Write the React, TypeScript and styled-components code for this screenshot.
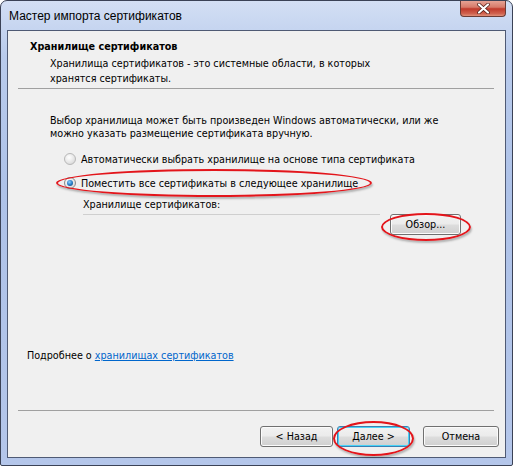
import React from "react";
import styled, { createGlobalStyle } from "styled-components";

const GlobalStyle = createGlobalStyle`
  html, body {
    margin: 0;
    padding: 0;
    background: #ffffff;
  }
  body {
    font-family: Tahoma, "DejaVu Sans Condensed", "DejaVu Sans", sans-serif;
    font-stretch: condensed;
    font-size: 10.7px;
    color: #000;
  }
`;

const Window = styled.div`
  position: relative;
  width: 513px;
  height: 466px;
  box-sizing: border-box;
  border: 1px solid #3b4256;
  border-radius: 7px 7px 2px 2px;
  background: linear-gradient(180deg, #d3dff4 0%, #b9cbec 12%, #aec2e8 40%, #b4c6ea 100%);
  display: flex;
  flex-direction: column;
  overflow: hidden;
`;

const TitleBar = styled.div`
  height: 29px;
  display: flex;
  align-items: flex-start;
  justify-content: space-between;
  padding-left: 8px;
`;

const Title = styled.div`
  font-family: "Liberation Sans", Arial, sans-serif;
  font-stretch: normal;
  font-size: 12px;
  line-height: 14px;
  margin-top: 8px;
  color: #000;
`;

const CloseButton = styled.div`
  width: 46px;
  height: 17px;
  margin-right: 6px;
  margin-top: -1px;
  box-sizing: border-box;
  border: 1px solid #6b3b35;
  border-top: none;
  border-radius: 0 0 4px 4px;
  background: linear-gradient(180deg, #e8a89a 0%, #d77a6a 45%, #c0392b 55%, #d0624f 85%, #e0907a 100%);
  display: flex;
  align-items: center;
  justify-content: center;
`;

const Client = styled.div`
  flex: 1;
  margin: 0 6px 7px 6px;
  border: 1px solid #4f5a74;
  background: #f0f0f0;
  display: flex;
  flex-direction: column;
`;

const Header = styled.div`
  padding: 9px 0 0 22px;
`;

const HeaderTitle = styled.div`
  font-weight: bold;
  line-height: 14px;
`;

const HeaderText = styled.div`
  margin-top: 2px;
  padding-left: 20px;
  line-height: 15px;
  width: 350px;
`;

const Separator = styled.div<{ $top: number }>`
  height: 1px;
  margin: ${(p) => p.$top}px 11px 0 10px;
  background: #a0a0a0;
`;

const Body = styled.div`
  flex: 1;
  display: flex;
  flex-direction: column;
  padding: 25px 0 0 42px;
`;

const Paragraph = styled.div`
  line-height: 13px;
  width: 420px;
`;

const Options = styled.div`
  margin-top: 7px;
  padding-left: 14px;
  display: flex;
  flex-direction: column;
`;

const OptionRow = styled.label`
  display: flex;
  align-items: center;
  gap: 5px;
  height: 24px;
  color: #000;
`;

const Radio = styled.span<{ $checked?: boolean }>`
  width: 12px;
  height: 12px;
  box-sizing: border-box;
  border-radius: 50%;
  border: 1px solid ${(p) => (p.$checked ? "#8a8a8a" : "#b8b8b8")};
  background: radial-gradient(circle at 40% 35%, #ffffff 0%, #e6e6e6 55%, #cfcfcf 100%);
  display: flex;
  align-items: center;
  justify-content: center;
  &::after {
    content: "";
    display: ${(p) => (p.$checked ? "block" : "none")};
    width: 6px;
    height: 6px;
    border-radius: 50%;
    background: radial-gradient(circle at 40% 35%, #8fd0ff 0%, #2a7fc8 50%, #0b3d6e 100%);
  }
`;

const StoreBlock = styled.div`
  padding-left: 33px;
  margin-top: 3px;
`;

const StoreLabel = styled.div`
  line-height: 13px;
`;

const StoreRow = styled.div`
  display: flex;
  align-items: flex-start;
  margin-top: 3px;
  gap: 10px;
`;

const StoreField = styled.div`
  width: 297px;
  height: 22px;
  box-sizing: border-box;
  border-top: 1px solid #cfcfcf;
`;

const Button = styled.div<{ $default?: boolean; $width?: number }>`
  width: ${(p) => p.$width ?? 73}px;
  height: 21px;
  box-sizing: border-box;
  border: 1px solid ${(p) => (p.$default ? "#3c7fb1" : "#707070")};
  border-radius: 3px;
  background: linear-gradient(180deg, #f2f2f2 0%, #ebebeb 48%, #dddddd 52%, #cfcfcf 100%);
  box-shadow: inset 0 0 0 1px ${(p) => (p.$default ? "#48d3f7" : "#fbfbfb")};
  display: flex;
  align-items: center;
  justify-content: center;
  line-height: 13px;
  color: #000;
`;

const Spacer = styled.div`
  flex: 1;
`;

const MoreInfo = styled.div`
  padding-left: 19px;
  line-height: 13px;
`;

const Link = styled.span`
  color: #0066cc;
  text-decoration: underline;
`;

const Footer = styled.div`
  display: flex;
  justify-content: flex-end;
  gap: 4px;
  padding: 15px 6px 10px 0;
`;

const FooterGap = styled.div`
  width: 5px;
`;

/* red marker ellipses drawn on top of the dialog */
const Marker = styled.div<{ $x: number; $y: number; $w: number; $h: number }>`
  position: absolute;
  left: ${(p) => p.$x}px;
  top: ${(p) => p.$y}px;
  width: ${(p) => p.$w}px;
  height: ${(p) => p.$h}px;
  box-sizing: border-box;
  border: 2px solid #e3151b;
  border-radius: 50%;
  box-shadow: 1px 2px 2px rgba(0, 0, 0, 0.25);
  pointer-events: none;
`;

export default function App() {
  return (
    <>
      <GlobalStyle />
      <Window>
        <TitleBar>
          <Title>Мастер импорта сертификатов</Title>
          <CloseButton>
            <svg width="13" height="11" viewBox="0 0 13 11">
              <path
                d="M2 1.5 L11 9.5 M11 1.5 L2 9.5"
                stroke="#4a1a14"
                strokeWidth="3.6"
                strokeLinecap="round"
              />
              <path
                d="M2 1.5 L11 9.5 M11 1.5 L2 9.5"
                stroke="#ffffff"
                strokeWidth="2.2"
                strokeLinecap="round"
              />
            </svg>
          </CloseButton>
        </TitleBar>
        <Client>
          <Header>
            <HeaderTitle>Хранилище сертификатов</HeaderTitle>
            <HeaderText>
              Хранилища сертификатов - это системные области, в которых
              хранятся сертификаты.
            </HeaderText>
          </Header>
          <Separator $top={2} />
          <Body>
            <Paragraph>
              Выбор хранилища может быть произведен Windows автоматически, или
              же можно указать размещение сертификата вручную.
            </Paragraph>
            <Options>
              <OptionRow>
                <Radio />
                Автоматически выбрать хранилище на основе типа сертификата
              </OptionRow>
              <OptionRow>
                <Radio $checked />
                Поместить все сертификаты в следующее хранилище
              </OptionRow>
            </Options>
            <StoreBlock>
              <StoreLabel>Хранилище сертификатов:</StoreLabel>
              <StoreRow>
                <StoreField />
                <Button $width={71}>Обзор...</Button>
              </StoreRow>
            </StoreBlock>
            <Spacer />
          </Body>
          <MoreInfo>
            Подробнее о <Link>хранилищах сертификатов</Link>
          </MoreInfo>
          <Separator $top={48} />
          <Footer>
            <Button>&lt; Назад</Button>
            <Button $default>Далее &gt;</Button>
            <FooterGap />
            <Button $width={76}>Отмена</Button>
          </Footer>
        </Client>
        <Marker $x={55} $y={168} $w={316} $h={28} />
        <Marker $x={380} $y={212} $w={90} $h={28} />
        <Marker $x={332} $y={420} $w={81} $h={35} />
      </Window>
    </>
  );
}
